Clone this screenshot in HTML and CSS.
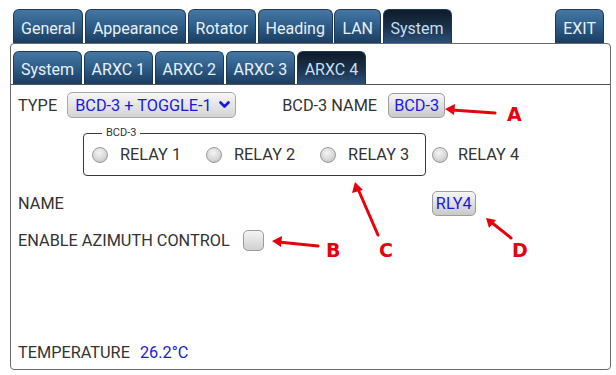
FILE: index.html
```html
<!DOCTYPE html>
<html>
<head>
<meta charset="utf-8">
<link rel="stylesheet" href="styles.css">
</head>
<body>
<div class="app">
  <div class="tabs">
    <div class="tab">General</div>
    <div class="tab">Appearance</div>
    <div class="tab">Rotator</div>
    <div class="tab">Heading</div>
    <div class="tab">LAN</div>
    <div class="tab active">System</div>
    <div class="tab exit">EXIT</div>
  </div>
  <div class="panel">
    <div class="subtabs">
      <div class="tab">System</div>
      <div class="tab">ARXC 1</div>
      <div class="tab">ARXC 2</div>
      <div class="tab">ARXC 3</div>
      <div class="tab active">ARXC 4</div>
    </div>
    <div class="content">
      <div class="row row-type">
        <span class="label">TYPE</span>
        <div class="select">BCD-3 + TOGGLE-1
          <svg class="chev" width="11" height="8" viewBox="0 0 11 8"><path d="M1.5 1.5 L5.5 5.5 L9.5 1.5" fill="none" stroke="#1a1adb" stroke-width="2.6" stroke-linecap="round" stroke-linejoin="round"/></svg>
        </div>
        <span class="label name-label">BCD-3 NAME</span>
        <div class="btn">BCD-3</div>
      </div>
      <div class="row row-relays">
        <div class="group">
          <span class="legend">BCD-3</span>
          <div class="opt first"><span class="radio"></span><span class="label">RELAY 1</span></div>
          <div class="opt"><span class="radio"></span><span class="label">RELAY 2</span></div>
          <div class="opt"><span class="radio"></span><span class="label">RELAY 3</span></div>
        </div>
        <div class="opt outside"><span class="radio"></span><span class="label">RELAY 4</span></div>
      </div>
      <div class="row row-name">
        <span class="label">NAME</span>
        <div class="btn rly">RLY4</div>
      </div>
      <div class="row row-az">
        <span class="label">ENABLE AZIMUTH CONTROL</span>
        <span class="check"></span>
      </div>
      <div class="spacer"></div>
      <div class="row row-temp">
        <span class="label">TEMPERATURE</span>
        <span class="value">26.2°C</span>
      </div>
    </div>
  </div>
  <svg class="annot" width="616" height="375" viewBox="0 0 616 375">
    <g stroke="#e8000c" stroke-width="3" fill="none" stroke-linecap="round">
      <path d="M495 113 L452 110"/>
      <path d="M318 246 L278 242"/>
      <path d="M378 235 L358 189"/>
      <path d="M511 238 L491 222"/>
    </g>
    <g fill="#e8000c">
      <path d="M445 109 L455 104 L454 115 Z"/>
      <path d="M272 241 L282 236 L281 247 Z"/>
      <path d="M355 182 L363 190 L352 193 Z"/>
      <path d="M486 218 L496 220 L489 228 Z"/>
    </g>
    <g class="letters" fill="#e8000c">
      <text x="507" y="121">A</text>
      <text x="326" y="257">B</text>
      <text x="379" y="257">C</text>
      <text x="512" y="257">D</text>
    </g>
  </svg>
</div>
</body>
</html>
```
FILE: styles.css
```css
html, body {
  margin: 0;
  padding: 0;
  background: #ffffff;
}
.app {
  position: relative;
  width: 616px;
  height: 375px;
  font-family: Roboto, "Liberation Sans", sans-serif;
  overflow: hidden;
}
.tabs {
  display: flex;
  gap: 1.5px;
  padding: 9px 12px 0 13px;
  height: 34px;
}
.tab {
  box-sizing: border-box;
  height: 34px;
  padding: 3px 7px 0;
  display: flex;
  align-items: center;
  justify-content: center;
  font-size: 16px;
  color: #e8f0f8;
  background: linear-gradient(to bottom, #4677a3 0%, #2f5f8a 45%, #1b3d60 100%);
  border: 1px solid #1d3a58;
  border-bottom: none;
  border-radius: 6px 6px 0 0;
}
.tab.active {
  background: linear-gradient(to bottom, #0e1b2a 0%, #1a3048 50%, #2b5079 100%);
  color: #c8def2;
}
.tab.exit {
  margin-left: auto;
}
.panel {
  box-sizing: border-box;
  margin: 0 5px 0 10px;
  height: 327px;
  border: 1px solid #6a6a6a;
  border-radius: 4px;
  display: flex;
  flex-direction: column;
}
.subtabs {
  display: flex;
  gap: 1.5px;
  padding: 7px 0 0 2px;
}
.subtabs .tab {
  height: 33px;
}
.content {
  flex: 1;
  border-top: 1px solid #555;
  display: flex;
  flex-direction: column;
  padding: 0 0 4px 7px;
}
.row {
  display: flex;
  align-items: center;
}
.label {
  font-size: 16.3px;
  color: #333333;
  white-space: nowrap;
}
.row-type {
  margin-top: 7px;
  height: 26px;
}
.select {
  box-sizing: border-box;
  margin-left: 10px;
  width: 169px;
  height: 26px;
  display: flex;
  align-items: center;
  padding-left: 7px;
  font-size: 16.3px;
  color: #1a1adb;
  background: linear-gradient(to bottom, #f6f6f6, #d4d4d4);
  border: 1px solid #a8a8a8;
  border-radius: 5px;
  white-space: nowrap;
}
.chev {
  margin-left: 7px;
}
.name-label {
  margin-left: 46px;
}
.btn {
  box-sizing: border-box;
  height: 25px;
  display: flex;
  align-items: center;
  padding: 0 5px;
  font-size: 16.3px;
  color: #1a1adb;
  background: linear-gradient(to bottom, #f6f6f6, #c9c9c9);
  border: 1px solid #9d9d9d;
  border-radius: 5px;
  margin-left: 11px;
}
.row-relays {
  margin-top: 15px;
}
.group {
  position: relative;
  box-sizing: border-box;
  margin-left: 65px;
  width: 343px;
  height: 43px;
  border: 1px solid #3a3a3a;
  border-radius: 4px;
  display: flex;
  align-items: center;
  padding-left: 8px;
}
.legend {
  position: absolute;
  top: -8px;
  left: 18px;
  padding: 0 4px;
  background: #fff;
  font-size: 11px;
  color: #333;
  line-height: 14px;
}
.opt {
  display: flex;
  align-items: center;
  gap: 12px;
  margin-left: 25px;
}
.opt.first {
  margin-left: 0;
}
.opt.outside {
  margin-left: 6px;
  gap: 10px;
}
.radio {
  box-sizing: border-box;
  width: 16px;
  height: 16px;
  border-radius: 50%;
  border: 1px solid #9a9a9a;
  background: radial-gradient(circle at 45% 35%, #f4f4f4 0%, #d8d8d8 55%, #b4b4b4 100%);
}
.row-name {
  margin-top: 14px;
  height: 26px;
}
.btn.rly {
  margin-left: 368px;
  padding: 0 3px;
}
.row-az {
  margin-top: 13px;
  height: 22px;
}
.check {
  box-sizing: border-box;
  width: 21px;
  height: 21px;
  margin-left: 13px;
  border: 1px solid #9a9a9a;
  border-radius: 5px;
  background: linear-gradient(to bottom, #f4f4f4, #d0d0d0);
}
.spacer {
  flex: 1;
}
.row-temp {
  height: 26px;
}
.value {
  margin-left: 10px;
  font-size: 16.3px;
  color: #1a1adb;
}
.annot {
  position: absolute;
  left: 0;
  top: 0;
  pointer-events: none;
}
.letters text {
  font-family: "DejaVu Sans", sans-serif;
  font-weight: bold;
  font-size: 19px;
}
```
